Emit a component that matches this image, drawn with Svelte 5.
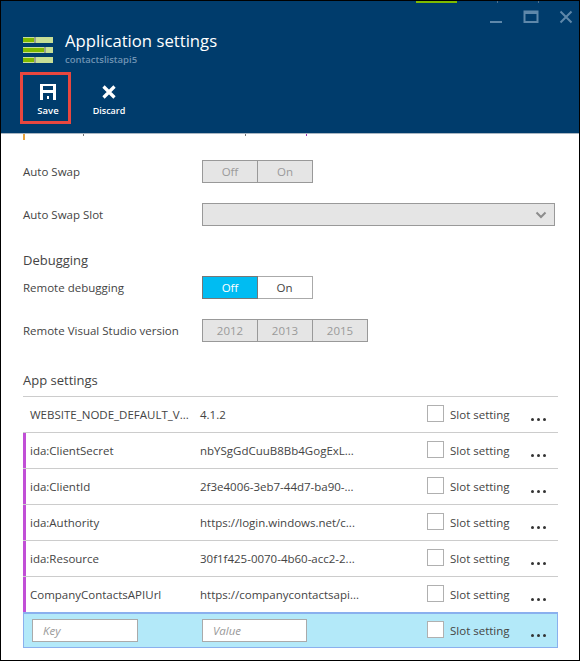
<script>
  const settings = [
    { key: 'WEBSITE_NODE_DEFAULT_V...', value: '4.1.2', mark: false },
    { key: 'ida:ClientSecret', value: 'nbYSgGdCuuB8Bb4GogExL...', mark: true },
    { key: 'ida:ClientId', value: '2f3e4006-3eb7-44d7-ba90-...', mark: true },
    { key: 'ida:Authority', value: 'https://login.windows.net/c...', mark: true },
    { key: 'ida:Resource', value: '30f1f425-0070-4b60-acc2-2...', mark: true },
    { key: 'CompanyContactsAPIUrl', value: 'https://companycontactsapi...', mark: true }
  ];
</script>

<div class="frame">
  <header class="head">
    <div class="strip"><span class="active"></span><span class="tick a"></span><span class="tick b"></span></div>
    <div class="winbtns">
      <svg width="14" height="14" viewBox="0 0 14 14"><rect x="1" y="11" width="12" height="2" fill="#5f88aa"/></svg>
      <svg width="16" height="14" viewBox="0 0 16 14"><path d="M1.5 1.5h13v10.5h-13z" fill="none" stroke="#5f88aa" stroke-width="2"/><rect x="1" y="1" width="14" height="3" fill="#5f88aa"/></svg>
      <svg width="14" height="14" viewBox="0 0 14 14"><path d="M1.5 1.5l11 11M12.5 1.5l-11 11" stroke="#5f88aa" stroke-width="2" fill="none"/></svg>
    </div>
    <div class="titlebar">
      <svg class="logo" width="30" height="26" viewBox="0 0 30 26">
        <rect y="0" width="30" height="6" fill="#c7de96"/><rect x="0" y="1" width="11" height="4" fill="#7fb900"/><rect x="11" y="0" width="2" height="6" fill="#9aa090"/>
        <rect y="10" width="30" height="6" fill="#c7de96"/><rect x="0" y="11" width="21" height="4" fill="#7fb900"/><rect x="21" y="10" width="2" height="6" fill="#9aa090"/>
        <rect y="20" width="30" height="6" fill="#c7de96"/><rect x="0" y="21" width="11" height="4" fill="#7fb900"/><rect x="11" y="20" width="2" height="6" fill="#9aa090"/>
      </svg>
      <div>
        <div class="title">Application settings</div>
        <div class="sub">contactslistapi5</div>
      </div>
    </div>
    <div class="cmds">
      <button class="cmd save">
        <svg width="16" height="16" viewBox="0 0 16 16"><path fill-rule="evenodd" d="M0 0h16v16h-3V9H3v7H0zM3 2v4h10V2zM7 12h2v3H7z" fill="#fff"/></svg>
        <span>Save</span>
      </button>
      <button class="cmd discard">
        <svg width="16" height="16" viewBox="0 0 16 16"><path d="M2.5 2.5l11 11M13.5 2.5l-11 11" stroke="#fff" stroke-width="3.2" fill="none"/></svg>
        <span>Discard</span>
      </button>
    </div>
  </header>

  <main class="body">
    <span class="clip"></span>
    <span class="mark-a"></span>
    <span class="mark-b"></span>
    <span class="mark-c"></span>
    <div class="field">
      <label>Auto Swap</label>
      <div class="seg"><span class="opt dis">Off</span><span class="opt dis">On</span></div>
    </div>
    <div class="field swap-slot">
      <label>Auto Swap Slot</label>
      <div class="select">
        <svg width="12" height="8" viewBox="0 0 12 8"><path d="M1.5 1.5L6 6l4.5-4.5" stroke="#8c8c8c" stroke-width="2" fill="none"/></svg>
      </div>
    </div>

    <h2 class="h-debug">Debugging</h2>
    <div class="field remote">
      <label>Remote debugging</label>
      <div class="seg live"><span class="opt on">Off</span><span class="opt">On</span></div>
    </div>
    <div class="field version">
      <label>Remote Visual Studio version</label>
      <div class="seg"><span class="opt dis">2012</span><span class="opt dis">2013</span><span class="opt dis">2015</span></div>
    </div>

    <h2 class="h-app">App settings</h2>
    <div class="table">
      {#each settings as s}
        <div class="row" class:mark={s.mark}>
          <span class="k">{s.key}</span>
          <span class="v">{s.value}</span>
          <span class="check"></span>
          <span class="slot">Slot setting</span>
          <span class="dots"><i></i><i></i><i></i></span>
        </div>
      {/each}
      <div class="row new">
        <span class="input key">Key</span>
        <span class="input val">Value</span>
        <span class="check"></span>
        <span class="slot">Slot setting</span>
        <span class="dots"><i></i><i></i><i></i></span>
      </div>
    </div>
  </main>
</div>

<style>
  :global(body) { margin: 0; background: #fff; }
  .frame {
    width: 580px; height: 661px; box-sizing: border-box;
    border: 1px solid #000;
    font-family: "Open Sans", "Noto Sans", sans-serif;
    font-size: 11.5px; color: #444; overflow: hidden; background: #fff;
  }
  .head {
    position: relative; height: 132px; background: #003c6c; color: #fff;
    border-bottom: 1px solid #a9b6c2; box-sizing: content-box;
  }
  .strip { position: absolute; inset: 0 0 auto 0; height: 2px; }
  .strip .active { position: absolute; left: 415px; width: 41px; height: 2px; background: #7fba00; }
  .strip .tick { position: absolute; width: 1px; height: 2px; background: #4a6f8f; }
  .strip .a { left: 496px; }
  .strip .b { left: 537px; }
  .winbtns { position: absolute; top: 9px; right: 6px; display: flex; gap: 20px; align-items: flex-start; }
  .titlebar { display: flex; align-items: flex-start; gap: 12px; padding: 36px 0 0 22px; }
  .logo { display: block; }
  .title { font-size: 16.7px; line-height: 22px; margin-top: -7px; color: #fff; }
  .sub { font-size: 9.5px; line-height: 13px; margin-top: 1px; font-weight: 600; color: #6f93b3; }
  .cmds { display: flex; padding: 6px 0 0 19px; }
  .cmd {
    width: 51px; height: 52px; box-sizing: border-box; padding: 9px 0 0 5px; background: none; border: 3px solid transparent;
    color: #fff; font: inherit; font-size: 9.5px; font-weight: 600; display: flex; flex-direction: column; align-items: center; gap: 4px;
  }
  .cmd span { line-height: 13px; white-space: nowrap; }
  .save { border-color: #e8473f; }
  .discard { margin-left: 10px; font-size: 9px; }

  .body { position: relative; padding: 26px 0 0 22px; }
  .clip { position: absolute; left: 22px; top: 0; width: 2px; height: 6px; background: #e8a33d; }
  .mark-a, .mark-b, .mark-c { position: absolute; top: 0; width: 1px; height: 2px; background: #777; }
  .mark-a { left: 82px; }
  .mark-b { left: 244px; }
  .mark-c { left: 305px; background: #9a2fb0; }
  .field { display: flex; align-items: center; height: 23px; }
  .field label { width: 179px; flex: none; }
  .swap-slot { margin-top: 20px; }
  .remote { margin-top: 7px; }
  .version { margin-top: 20px; }
  h2 { font-size: 13px; font-weight: 400; margin: 0; line-height: 18px; color: #444; }
  .h-debug { margin-top: 25px; }
  .h-app { margin-top: 29px; }
  .seg { display: flex; border: 1px solid #999; background: #e5e5e5; box-sizing: border-box; height: 23px; }
  .opt { width: 54px; text-align: center; line-height: 21px; border-left: 1px solid #999; box-sizing: content-box; font-size: 11.5px; color: #444; }
  .opt:first-child { border-left: 0; }
  .dis { color: #9a9a9a; }
  .live { background: #fff; border-color: #aaa; }
  .live .opt { border-left: 0; }
  .live .opt:last-child { width: 55px; }
  .live .on { background: #00bcf2; color: #fff; box-shadow: 0 0 0 1px #777; position: relative; z-index: 1; }
  .select {
    width: 353px; height: 23px; box-sizing: border-box; border: 1px solid #999; background: #e5e5e5;
    display: flex; align-items: center; justify-content: flex-end; padding-right: 7px;
  }
  .table { width: 535px; margin-top: 7px; }
  .row {
    position: relative; display: flex; align-items: center; height: 36px; box-sizing: border-box;
    border-top: 1px solid #ccc; padding-left: 7px;
  }
  .row.mark::before { content: ""; position: absolute; left: 0; top: 0; bottom: 0; width: 3px; background: #c14fd6; }
  .k { width: 170px; flex: none; white-space: nowrap; }
  .v { width: 227px; flex: none; white-space: nowrap; }
  .check { width: 15px; height: 15px; flex: none; border: 1px solid #b0b0b0; background: #fff; margin-top: -2px; }
  .slot { margin-left: 6px; width: 81px; flex: none; white-space: nowrap; }
  .dots { display: flex; gap: 3px; margin-top: 10px; }
  .dots i { width: 3px; height: 3px; border-radius: 50%; background: #333; }
  .row.new {
    background: #b3e9f9; border: 1px solid #8ab0ee; border-top-width: 2px; padding-left: 8px; height: 36px;
  }
  .input {
    box-sizing: border-box; height: 23px; border: 1px solid #aaa; background: #fff; color: #999; font-style: italic;
    padding-left: 10px; line-height: 21px; flex: none;
  }
  .key { width: 106px; margin-right: 64px; }
  .val { width: 105px; margin-right: 120px; }
</style>
